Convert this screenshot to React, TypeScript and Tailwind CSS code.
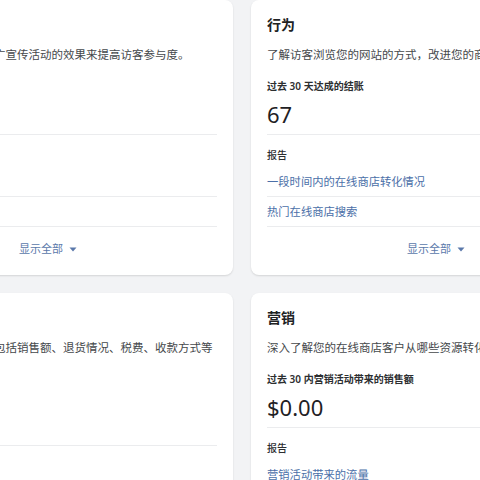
import React from "react";

interface ReportCardProps {
  title: string;
  description: string;
  metricLabel: string;
  metricValue: string;
  reports: string[];
}

const font = { fontFamily: '"Noto Sans", "Noto Sans CJK SC", sans-serif' };

function Caret() {
  return (
    <svg width="8" height="5" viewBox="0 0 8 5" className="ml-[6px] mt-px">
      <path d="M0.5 0.5h7L4 4.5z" fill="#5a78aa" />
    </svg>
  );
}

function ReportCard({ title, description, metricLabel, metricValue, reports }: ReportCardProps) {
  return (
    <div className="bg-white rounded-lg shadow-[0_1px_2px_rgba(0,0,0,0.13)] px-4">
      <div className="border-b border-[#ebecee] pb-[6px]">
        <h2 className="pt-[15px] text-[14px] leading-[20px] font-semibold text-[#202223]">{title}</h2>
        <p className="mt-[11px] text-[11.5px] leading-[18px] text-[#45484b]">{description}</p>
        <p className="mt-[14px] text-[10px] leading-[16px] font-semibold text-[#2c2e30] whitespace-nowrap">
          {metricLabel}
        </p>
        <p className="mt-[6px] text-[22px] leading-[28px] text-[#1f2124]">{metricValue}</p>
      </div>
      <p className="pt-[12px] text-[10px] leading-[16px] font-medium text-[#2c2e30]">报告</p>
      <ul className="mt-1">
        {reports.map((r) => (
          <li
            key={r}
            className="h-[30px] flex items-center border-b border-[#ebecee] text-[11.3px] leading-[18px] text-[#4b6fa8] whitespace-nowrap"
          >
            {r}
          </li>
        ))}
      </ul>
      <div className="pt-[13px] pb-[17px] flex items-center justify-center text-[11px] leading-[18px] text-[#5a78aa]">
        显示全部
        <Caret />
      </div>
    </div>
  );
}

export default function App() {
  return (
    <div className="w-[480px] h-[480px] overflow-hidden bg-[#f2f3f5]" style={font}>
      <div className="ml-[-137px] grid grid-cols-[370px_370px] gap-[18px] items-start">
        <ReportCard
          title="获客"
          description="通过分析您的营销和推广宣传活动的效果来提高访客参与度。"
          metricLabel="过去 30 天的会话"
          metricValue="1,204"
          reports={["按来源划分的会话", "按位置划分的会话"]}
        />
        <ReportCard
          title="行为"
          description="了解访客浏览您的网站的方式，改进您的商店体验。"
          metricLabel="过去 30 天达成的结账"
          metricValue="67"
          reports={["一段时间内的在线商店转化情况", "热门在线商店搜索"]}
        />
        <ReportCard
          title="财务"
          description="查看商店的财务概况，包括销售额、退货情况、税费、收款方式等详细信息。"
          metricLabel="过去 30 天总销售额"
          metricValue="$0.00"
          reports={["财务摘要", "税费报告"]}
        />
        <ReportCard
          title="营销"
          description="深入了解您的在线商店客户从哪些资源转化而来。"
          metricLabel="过去 30 内营销活动带来的销售额"
          metricValue="$0.00"
          reports={["营销活动带来的流量", "营销活动带来的转化"]}
        />
      </div>
    </div>
  );
}
